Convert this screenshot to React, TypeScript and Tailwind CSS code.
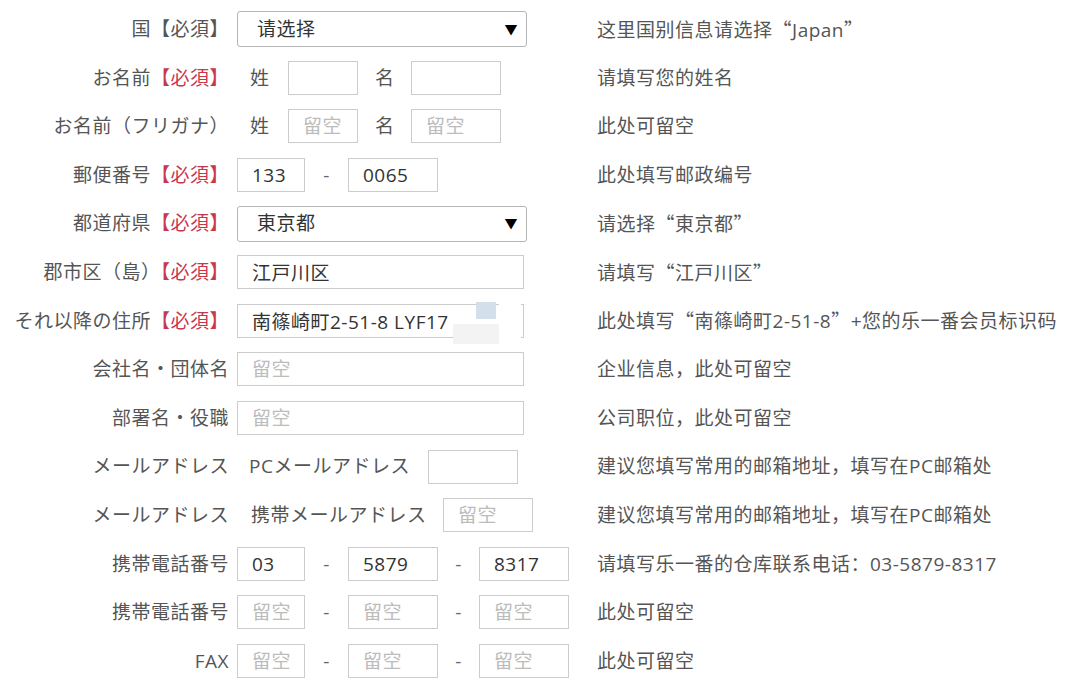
import React from "react";

const font = "font-['Open_Sans','Noto_Sans_CJK_SC',sans-serif]";

function Req() {
  return <span className="text-[#c8374c]">【必須】</span>;
}

// full-width quotation marks, as the CJK font draws them
function Q({ children }: { children: React.ReactNode }) {
  return (
    <>
      <span className="font-['Noto_Sans_CJK_SC',sans-serif]">“</span>
      {children}
      <span className="font-['Noto_Sans_CJK_SC',sans-serif]">”</span>
    </>
  );
}

function Box({ w, value, ph }: { w: string; value?: string; ph?: string }) {
  return (
    <input
      readOnly
      defaultValue={value}
      placeholder={ph}
      className={`${w} h-[34px] border border-[#cccccc] bg-white pl-[14px] text-[19px] tracking-[0.5px] text-[#333] placeholder:text-[#bcbcbc] outline-none`}
    />
  );
}

function Select({ value }: { value: string }) {
  return (
    <div className="flex h-[36px] w-[290px] items-center justify-between rounded-[3px] border border-[#b5b5b5] bg-white pl-[19px] pr-[8px] text-[#333]">
      <span>{value}</span>
      <span className="text-[13px] text-black">▼</span>
    </div>
  );
}

function Dash({ narrow }: { narrow?: boolean }) {
  return <span className={`${narrow ? "w-[41px]" : "w-[43px]"} text-center text-[#666]`}>-</span>;
}

function Row({ label, children, hint }: { label: React.ReactNode; children: React.ReactNode; hint: React.ReactNode }) {
  return (
    <div className="flex h-[48.6px] items-center">
      <div className="w-[229px] whitespace-nowrap text-right text-[#555]">{label}</div>
      <div className="relative ml-[8px] flex w-[360px] items-center text-[#555]">{children}</div>
      <div className="whitespace-nowrap text-[#555]">{hint}</div>
    </div>
  );
}

function Phone({ values }: { values?: [string, string, string] }) {
  return (
    <>
      <Box w="w-[68px]" value={values?.[0]} ph={values ? undefined : "留空"} />
      <Dash />
      <Box w="w-[90px]" value={values?.[1]} ph={values ? undefined : "留空"} />
      <Dash narrow />
      <Box w="w-[90px]" value={values?.[2]} ph={values ? undefined : "留空"} />
    </>
  );
}

export default function App() {
  return (
    <div className={`${font} min-h-[686px] w-[1080px] bg-white pt-[5px] text-[19px] tracking-[0.5px]`}>
      <Row label={<>国<span className="text-[#555]">【必須】</span></>} hint={<>这里国别信息请选择<Q>Japan</Q></>}>
        <Select value="请选择" />
      </Row>
      <Row label={<>お名前<Req /></>} hint="请填写您的姓名">
        <span className="ml-[13px] w-[38px]">姓</span>
        <Box w="w-[70px]" />
        <span className="ml-[17px] w-[36px]">名</span>
        <Box w="w-[90px]" />
      </Row>
      <Row label="お名前（フリガナ）" hint="此处可留空">
        <span className="ml-[13px] w-[38px]">姓</span>
        <Box w="w-[70px]" ph="留空" />
        <span className="ml-[17px] w-[36px]">名</span>
        <Box w="w-[90px]" ph="留空" />
      </Row>
      <Row label={<>郵便番号<Req /></>} hint="此处填写邮政编号">
        <Box w="w-[68px]" value="133" />
        <Dash />
        <Box w="w-[90px]" value="0065" />
      </Row>
      <Row label={<>都道府県<Req /></>} hint={<>请选择<Q>東京都</Q></>}>
        <Select value="東京都" />
      </Row>
      <Row label={<>郡市区（島）<Req /></>} hint={<>请填写<Q>江戸川区</Q></>}>
        <Box w="w-[287px]" value="江戸川区" />
      </Row>
      <Row label={<>それ以降の住所<Req /></>} hint={<>此处填写<Q>南篠崎町2-51-8</Q>+您的乐一番会员标识码</>}>
        <Box w="w-[287px]" value="南篠崎町2-51-8 LYF17" />
        <div className="absolute left-[216px] top-[20px] h-[20px] w-[46px] bg-[#f3f3f3]" />
        <div className="absolute left-[239px] top-[-2px] h-[17px] w-[20px] bg-[#d3dfeb]" />
        <div className="absolute left-[262px] top-[0px] h-[34px] w-[22px] bg-white" />
      </Row>
      <Row label="会社名・団体名" hint="企业信息，此处可留空">
        <Box w="w-[287px]" ph="留空" />
      </Row>
      <Row label="部署名・役職" hint="公司职位，此处可留空">
        <Box w="w-[287px]" ph="留空" />
      </Row>
      <Row label="メールアドレス" hint="建议您填写常用的邮箱地址，填写在PC邮箱处">
        <span className="ml-[12px] w-[179px] whitespace-nowrap">PCメールアドレス</span>
        <Box w="w-[90px]" />
      </Row>
      <Row label="メールアドレス" hint="建议您填写常用的邮箱地址，填写在PC邮箱处">
        <span className="ml-[14px] w-[192px] whitespace-nowrap">携帯メールアドレス</span>
        <Box w="w-[90px]" ph="留空" />
      </Row>
      <Row label="携帯電話番号" hint="请填写乐一番的仓库联系电话：03-5879-8317">
        <Phone values={["03", "5879", "8317"]} />
      </Row>
      <Row label="携帯電話番号" hint="此处可留空">
        <Phone />
      </Row>
      <Row label="FAX" hint="此处可留空">
        <Phone />
      </Row>
    </div>
  );
}
